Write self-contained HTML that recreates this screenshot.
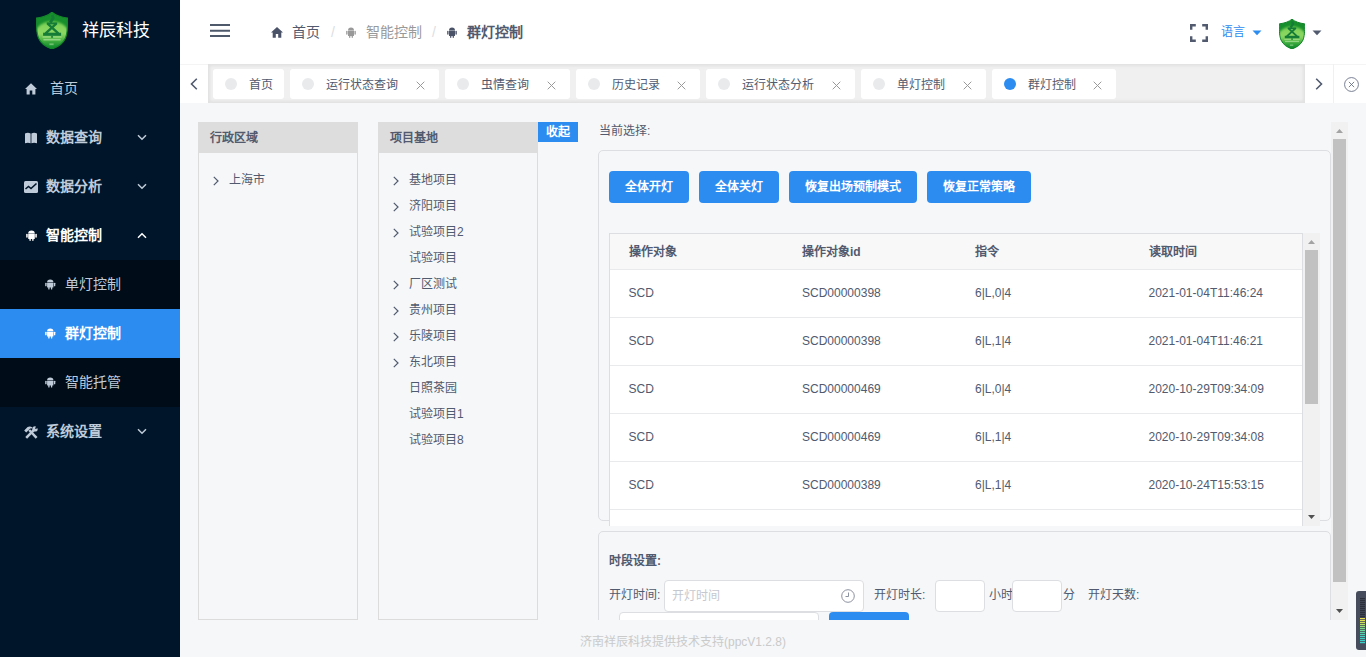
<!DOCTYPE html>
<html lang="zh-CN">
<head>
<meta charset="utf-8">
<title>群灯控制</title>
<style>
*{box-sizing:border-box;margin:0;padding:0}
html,body{width:1366px;height:657px;overflow:hidden}
body{font-family:"Liberation Sans",sans-serif;font-size:14px;color:#606266;background:#f5f7f9;position:relative}
svg{display:block}
.abs{position:absolute}

/* sidebar */
#side{position:absolute;left:0;top:0;width:180px;height:657px;background:#001529;overflow:hidden}
#logo{position:absolute;left:36px;top:12px;width:32px;height:37px}
#brand{position:absolute;left:82px;top:18px;font-size:17px;line-height:26px;color:#fff;white-space:nowrap}
.mi{position:absolute;left:0;width:180px;height:49px;color:#bfcbd9;font-size:14px;line-height:49px;white-space:nowrap}
.mi .ic{position:absolute;left:24px;top:18px;width:14px;height:14px}
.mi .tx{position:absolute;left:46px;top:0;font-weight:bold}
.mi .ar{position:absolute;left:137px;top:21px;width:10px;height:7px}
.mi.sub{background:#000c17}
.mi.sub .ic{left:43px}
.mi.sub .tx{left:65px;font-weight:normal}
.mi.act{background:#2d8cf0;color:#fff}

/* header */
#head{position:absolute;left:180px;top:0;width:1186px;height:64px;background:#fff}
.bc{position:absolute;top:22px;font-size:14px;line-height:20px;white-space:nowrap}

/* tabs */
#tabs{position:absolute;left:180px;top:64px;width:1186px;height:39px;background:#f0f0f0}
#tabs .bg{position:absolute;left:28px;top:0;width:1097px;height:39px;box-shadow:inset 0 0 3px 2px rgba(100,100,100,.1)}
.tb{position:absolute;top:5px;height:30px;background:#fff;border-radius:3px;font-size:12px;line-height:30px;color:#515a6e;white-space:nowrap}
.tb .dot{position:absolute;left:12px;top:9px;width:12px;height:12px;border-radius:50%;background:#e8eaec}
.tb .t{position:absolute;left:36px;top:1px}
.tb .x{position:absolute;right:14px;top:12px;width:9px;height:9px}
.nav{position:absolute;top:0;height:39px;background:#fff;border-top:1px solid #f4f4f4}

/* panels */
.pn{position:absolute;top:122px;width:160px;height:498px;border:1px solid #dcdcdc;background:#f5f7f9}
.pn .hd{position:absolute;left:-1px;top:-1px;width:160px;height:31px;background:#dddddd;font-weight:bold;font-size:12px;line-height:33px;padding-left:12px;color:#515a6e}
.tr{position:absolute;font-size:12px;line-height:26px;color:#515a6e;white-space:nowrap}
.chev{position:absolute;width:6px;height:10px}

.card{position:absolute;left:598px;width:733px;border:1px solid #dcdee2;border-radius:5px;background:#f5f7f9}
.btn{position:absolute;top:171px;height:32px;background:#2d8cf0;border-radius:4px;color:#fff;font-weight:bold;font-size:12px;line-height:32px;text-align:center;white-space:nowrap}

#tbl{position:absolute;left:609px;top:233px;width:694px;height:293px;background:#fff;border:1px solid #dcdee2;border-bottom:none;overflow:hidden}
.row{position:absolute;left:0;width:692px;height:48px;border-bottom:1px solid #e8eaec;font-size:12px;line-height:47px;color:#515a6e;white-space:nowrap}
.row span{position:absolute;top:0}
.row.h{height:36px;line-height:37px;background:#f8f8f9;font-weight:bold}
.c1{left:18.500px}.c2{left:192px}.c3{left:365px}.c4{left:538.500px}
.inp{position:absolute;background:#fff;border:1px solid #dcdee2;border-radius:4px}
.lb{position:absolute;font-size:12px;line-height:18px;color:#515a6e;white-space:nowrap}
</style>
</head>
<body>

<!-- SIDEBAR -->
<div id="side">
  <svg id="logo" viewBox="0 0 32 37"><use href="#shield"/></svg>
  <div id="brand">祥辰科技</div>

  <div class="mi" style="top:64px">
    <svg class="ic" style="left:25px;top:19px;width:12px;height:12px" viewBox="0 0 12 12"><path d="M6 0.200 L0 5.900 L1.600 5.900 L1.600 11.500 L4.700 11.500 L4.700 7.600 L7.300 7.600 L7.300 11.500 L10.400 11.500 L10.400 5.900 L12 5.900 Z" fill="#bfcbd9"/></svg>
    <span class="tx" style="left:50px;font-weight:normal">首页</span>
  </div>
  <div class="mi" style="top:113px">
    <svg class="ic" style="left:25px;top:19px;width:12px;height:12px" viewBox="0 0 12 12"><path d="M0 1.500 Q3 0 5.600 1.500 L5.600 11.300 Q3 10 0 11.300 Z M12 1.500 Q9 0 6.400 1.500 L6.400 11.300 Q9 10 12 11.300 Z" fill="#bfcbd9"/></svg>
    <span class="tx">数据查询</span>
    <svg class="ar" viewBox="0 0 10 7"><path d="M1 1.200 L5 5.200 L9 1.200" fill="none" stroke="#bfcbd9" stroke-width="1.500"/></svg>
  </div>
  <div class="mi" style="top:162px">
    <svg class="ic" style="left:24px;top:19px;width:14px;height:12px" viewBox="0 0 14 12"><rect x="0" y="0" width="14" height="12" rx="1.500" fill="#bfcbd9"/><path d="M1.500 8 L4.500 5.500 L7 7.500 L12.500 2.500" fill="none" stroke="#001529" stroke-width="1.600"/></svg>
    <span class="tx">数据分析</span>
    <svg class="ar" viewBox="0 0 10 7"><path d="M1 1.200 L5 5.200 L9 1.200" fill="none" stroke="#bfcbd9" stroke-width="1.500"/></svg>
  </div>
  <div class="mi" style="top:211px;color:#fff">
    <svg class="ic" style="left:26px;top:18.500px;width:11px;height:11px" viewBox="0 0 11 12" preserveAspectRatio="none"><use href="#andr" fill="#fff"/></svg>
    <span class="tx">智能控制</span>
    <svg class="ar" viewBox="0 0 10 7"><path d="M1 5.800 L5 1.800 L9 5.800" fill="none" stroke="#fff" stroke-width="1.500"/></svg>
  </div>
  <div class="mi sub" style="top:260px">
    <svg class="ic" style="left:45px;top:19px;width:10.500px;height:10.500px" viewBox="0 0 11 12" preserveAspectRatio="none"><use href="#andr" fill="#bfcbd9"/></svg>
    <span class="tx">单灯控制</span>
  </div>
  <div class="mi sub act" style="top:309px">
    <svg class="ic" style="left:45px;top:19px;width:10.500px;height:10.500px" viewBox="0 0 11 12" preserveAspectRatio="none"><use href="#andr" fill="#fff"/></svg>
    <span class="tx" style="font-weight:bold">群灯控制</span>
  </div>
  <div class="mi sub" style="top:358px">
    <svg class="ic" style="left:45px;top:19px;width:10.500px;height:10.500px" viewBox="0 0 11 12" preserveAspectRatio="none"><use href="#andr" fill="#bfcbd9"/></svg>
    <span class="tx">智能托管</span>
  </div>
  <div class="mi" style="top:407px">
    <svg class="ic" style="left:24px;top:19px;width:14px;height:13px" viewBox="0 0 14 13"><g stroke="#bfcbd9" stroke-width="2.500" fill="none"><path d="M5.200 4 L12.600 11.800"/><path d="M10 3.800 L2.200 11.800"/></g><path d="M0.200 4.400 L3.600 1 Q6 -0.200 8.400 1.400 L7.600 2.600 L6.200 2.400 L3 5.800 L2.200 6.400 Z" fill="#bfcbd9"/><circle cx="11" cy="2.900" r="2.700" fill="#bfcbd9"/><path d="M11 2.900 L12.100 -0.500 L15 2 Z" fill="#001529"/></svg>
    <span class="tx">系统设置</span>
    <svg class="ar" viewBox="0 0 10 7"><path d="M1 1.200 L5 5.200 L9 1.200" fill="none" stroke="#bfcbd9" stroke-width="1.500"/></svg>
  </div>
</div>

<svg width="0" height="0" style="position:absolute">
  <defs>
    <linearGradient id="lg1" x1="0" y1="0" x2="0" y2="1">
      <stop offset="0" stop-color="#17902c"/><stop offset="1" stop-color="#14882b"/>
    </linearGradient>
    <linearGradient id="lg2" gradientUnits="userSpaceOnUse" x1="0" y1="8" x2="0" y2="37">
      <stop offset="0" stop-color="#4fbd3a"/><stop offset="0.200" stop-color="#84d45c"/><stop offset="0.480" stop-color="#8dd863"/><stop offset="0.680" stop-color="#4db544"/><stop offset="0.880" stop-color="#1c9431"/><stop offset="1" stop-color="#14882b"/>
    </linearGradient>
    <filter id="bl" x="-20%" y="-20%" width="140%" height="140%"><feGaussianBlur stdDeviation="1.100"/></filter>
    <clipPath id="shc"><path d="M16 0.200 C12.500 3.200 6.500 5.300 0.400 6 C0.200 16 0.800 22 2.500 26 C5 31.500 10 35 16 36.900 C22 35 27 31.500 29.500 26 C31.200 22 31.800 16 31.600 6 C25.500 5.300 19.500 3.200 16 0.200Z"/></clipPath>
    <g id="shield">
      <path d="M16 0.200 C12.500 3.200 6.500 5.300 0.400 6 C0.200 16 0.800 22 2.500 26 C5 31.500 10 35 16 36.900 C22 35 27 31.500 29.500 26 C31.200 22 31.800 16 31.600 6 C25.500 5.300 19.500 3.200 16 0.200Z" fill="url(#lg1)"/>
      <g clip-path="url(#shc)"><ellipse cx="16" cy="30" rx="20" ry="21" fill="url(#lg2)" filter="url(#bl)"/></g>
      <path d="M16 0.200 C12.500 3.200 6.500 5.300 0.400 6 C0.200 16 0.800 22 2.500 26 C5 31.500 10 35 16 36.900 C22 35 27 31.500 29.500 26 C31.200 22 31.800 16 31.600 6 C25.500 5.300 19.500 3.200 16 0.200Z" fill="none" stroke="#13852a" stroke-width="1.200"/>
      <g fill="none" stroke="#157c38" stroke-linejoin="round"><path d="M16.300 3 L17.200 6.200 L14.200 10.600" stroke-width="2.800"/><path d="M10.700 11.400 H21.200" stroke-width="2"/><path d="M11.600 11.600 L22.300 21.400 M20.300 11.600 L9.600 21.400" stroke-width="2.400"/></g><rect x="7.100" y="20.700" width="18" height="3.100" fill="#157c38"/><rect x="15.300" y="23.800" width="1.500" height="2" fill="#157c38"/>
      <rect x="6.500" y="24.500" width="8.400" height="1" fill="#b9eaa0" opacity=".75"/>
      <rect x="17.200" y="24.500" width="8.400" height="1" fill="#b9eaa0" opacity=".75"/>
      <rect x="7.400" y="26.900" width="17.200" height="1.600" fill="#c9efbb" opacity=".55"/>
      <rect x="13.400" y="31.400" width="4.200" height="1.800" fill="#c9efbb" opacity=".45"/>
    </g>
    <g id="andr">
      <path d="M2.200 4.200 L8.800 4.200 L8.800 9.200 Q8.800 9.800 8.200 9.800 L7.600 9.800 L7.600 11.300 A0.700 0.700 0 0 1 6.200 11.300 L6.200 9.800 L4.800 9.800 L4.800 11.300 A0.700 0.700 0 0 1 3.400 11.300 L3.400 9.800 L2.800 9.800 Q2.200 9.800 2.200 9.200 Z"/>
      <path d="M2.200 3.700 A3.300 3.200 0 0 1 8.800 3.700 Z"/>
      <rect x="0.200" y="4.200" width="1.500" height="4.200" rx="0.750"/>
      <rect x="9.300" y="4.200" width="1.500" height="4.200" rx="0.750"/>
    </g>
  </defs>
</svg>

<!-- HEADER -->
<div id="head">
  <svg class="abs" style="left:30px;top:24px;width:20px;height:14px" viewBox="0 0 20 14"><path d="M0 1 H20 M0 6.800 H20 M0 12 H20" stroke="#4e5a6c" stroke-width="2" fill="none"/></svg>
  <svg class="abs" style="left:91px;top:27px;width:12px;height:11px" viewBox="0 0 12 11"><path d="M6 0 L0 5.600 L1.700 5.600 L1.700 10.800 L4.800 10.800 L4.800 7 L7.200 7 L7.200 10.800 L10.300 10.800 L10.300 5.600 L12 5.600 Z" fill="#4a5268"/></svg>
  <span class="bc" style="left:112px;color:#515a6e">首页</span>
  <span class="bc" style="left:151px;color:#dcdee2">/</span>
  <svg class="abs" style="left:166px;top:27px;width:10px;height:11px" viewBox="0 0 11 12"><use href="#andr" fill="#999"/></svg>
  <span class="bc" style="left:186px;color:#999">智能控制</span>
  <span class="bc" style="left:252px;color:#dcdee2">/</span>
  <svg class="abs" style="left:267px;top:27px;width:10px;height:11px" viewBox="0 0 11 12"><use href="#andr" fill="#4a5268"/></svg>
  <span class="bc" style="left:287px;color:#515a6e;font-weight:bold">群灯控制</span>

  <svg class="abs" style="left:1010px;top:24px;width:18px;height:18px" viewBox="0 0 18 18"><path d="M1.200 5.800 V1.200 H5.800 M12.200 1.200 H16.800 V5.800 M16.800 12.200 V16.800 H12.200 M5.800 16.800 H1.200 V12.200" fill="none" stroke="#515a6e" stroke-width="2.400"/></svg>
  <span class="abs" style="left:1041px;top:22px;font-size:12px;line-height:20px;color:#2d8cf0;white-space:nowrap">语言</span>
  <svg class="abs" style="left:1072px;top:30px;width:10px;height:6px" viewBox="0 0 10 6"><path d="M0.500 0.500 H9.500 L5 5.200 Z" fill="#2d8cf0"/></svg>
  <svg class="abs" style="left:1099px;top:19px;width:26px;height:30px" viewBox="0 0 32 37"><use href="#shield"/></svg>
  <svg class="abs" style="left:1132px;top:30px;width:10px;height:6px" viewBox="0 0 10 6"><path d="M0.500 0.500 H9.500 L5 5.200 Z" fill="#515a6e"/></svg>
</div>

<!-- TABS -->
<div id="tabs">
  <div class="bg"></div>
  <div class="nav" style="left:0;width:28px"><svg class="abs" style="left:10px;top:13px;width:8px;height:12px" viewBox="0 0 8 12"><path d="M6.800 0.800 L1.500 6 L6.800 11.200" fill="none" stroke="#515a6e" stroke-width="1.600"/></svg></div>
  <div class="tb" style="left:33px;width:71px"><i class="dot"></i><span class="t">首页</span></div>
  <div class="tb" style="left:110px;width:149px"><i class="dot"></i><span class="t">运行状态查询</span><svg class="x" viewBox="0 0 9 9"><path d="M0.700 0.700 L8.300 8.300 M8.300 0.700 L0.700 8.300" stroke="#999" stroke-width="1" fill="none"/></svg></div>
  <div class="tb" style="left:265px;width:125px"><i class="dot"></i><span class="t">虫情查询</span><svg class="x" viewBox="0 0 9 9"><path d="M0.700 0.700 L8.300 8.300 M8.300 0.700 L0.700 8.300" stroke="#999" stroke-width="1" fill="none"/></svg></div>
  <div class="tb" style="left:396px;width:124px"><i class="dot"></i><span class="t">历史记录</span><svg class="x" viewBox="0 0 9 9"><path d="M0.700 0.700 L8.300 8.300 M8.300 0.700 L0.700 8.300" stroke="#999" stroke-width="1" fill="none"/></svg></div>
  <div class="tb" style="left:526px;width:149px"><i class="dot"></i><span class="t">运行状态分析</span><svg class="x" viewBox="0 0 9 9"><path d="M0.700 0.700 L8.300 8.300 M8.300 0.700 L0.700 8.300" stroke="#999" stroke-width="1" fill="none"/></svg></div>
  <div class="tb" style="left:681px;width:125px"><i class="dot"></i><span class="t">单灯控制</span><svg class="x" viewBox="0 0 9 9"><path d="M0.700 0.700 L8.300 8.300 M8.300 0.700 L0.700 8.300" stroke="#999" stroke-width="1" fill="none"/></svg></div>
  <div class="tb" style="left:812px;width:124px"><i class="dot" style="background:#2d8cf0"></i><span class="t">群灯控制</span><svg class="x" viewBox="0 0 9 9"><path d="M0.700 0.700 L8.300 8.300 M8.300 0.700 L0.700 8.300" stroke="#999" stroke-width="1" fill="none"/></svg></div>
  <div class="nav" style="left:1125px;width:28px"><svg class="abs" style="left:10px;top:13px;width:8px;height:12px" viewBox="0 0 8 12"><path d="M1.200 0.800 L6.500 6 L1.200 11.200" fill="none" stroke="#515a6e" stroke-width="1.600"/></svg></div>
  <div class="nav" style="left:1154px;width:32px"><svg class="abs" style="left:9.500px;top:11.500px;width:15px;height:15px" viewBox="0 0 16 16"><circle cx="8" cy="8" r="7.400" fill="none" stroke="#626a80" stroke-width="0.900"/><path d="M5.200 5.200 L10.800 10.800 M10.800 5.200 L5.200 10.800" stroke="#626a80" stroke-width="0.900"/></svg></div>
</div>

<!-- CONTENT -->
<div class="pn" style="left:198px"><div class="hd">行政区域</div></div>
<svg class="chev" style="left:213px;top:176px" viewBox="0 0 6 10"><path d="M0.800 0.800 L5 5 L0.800 9.200" fill="none" stroke="#515a6e" stroke-width="1.200"/></svg>
<span class="tr" style="left:229px;top:167px">上海市</span>
<div class="pn" style="left:378px"><div class="hd">项目基地</div></div>
<svg class="chev" style="left:393px;top:176px" viewBox="0 0 6 10"><path d="M0.800 0.800 L5 5 L0.800 9.200" fill="none" stroke="#515a6e" stroke-width="1.200"/></svg>
<span class="tr" style="left:409px;top:167px">基地项目</span>
<svg class="chev" style="left:393px;top:202px" viewBox="0 0 6 10"><path d="M0.800 0.800 L5 5 L0.800 9.200" fill="none" stroke="#515a6e" stroke-width="1.200"/></svg>
<span class="tr" style="left:409px;top:193px">济阳项目</span>
<svg class="chev" style="left:393px;top:228px" viewBox="0 0 6 10"><path d="M0.800 0.800 L5 5 L0.800 9.200" fill="none" stroke="#515a6e" stroke-width="1.200"/></svg>
<span class="tr" style="left:409px;top:219px">试验项目2</span>
<span class="tr" style="left:409px;top:245px">试验项目</span>
<svg class="chev" style="left:393px;top:280px" viewBox="0 0 6 10"><path d="M0.800 0.800 L5 5 L0.800 9.200" fill="none" stroke="#515a6e" stroke-width="1.200"/></svg>
<span class="tr" style="left:409px;top:271px">厂区测试</span>
<svg class="chev" style="left:393px;top:306px" viewBox="0 0 6 10"><path d="M0.800 0.800 L5 5 L0.800 9.200" fill="none" stroke="#515a6e" stroke-width="1.200"/></svg>
<span class="tr" style="left:409px;top:297px">贵州项目</span>
<svg class="chev" style="left:393px;top:332px" viewBox="0 0 6 10"><path d="M0.800 0.800 L5 5 L0.800 9.200" fill="none" stroke="#515a6e" stroke-width="1.200"/></svg>
<span class="tr" style="left:409px;top:323px">乐陵项目</span>
<svg class="chev" style="left:393px;top:358px" viewBox="0 0 6 10"><path d="M0.800 0.800 L5 5 L0.800 9.200" fill="none" stroke="#515a6e" stroke-width="1.200"/></svg>
<span class="tr" style="left:409px;top:349px">东北项目</span>
<span class="tr" style="left:409px;top:375px">日照茶园</span>
<span class="tr" style="left:409px;top:401px">试验项目1</span>
<span class="tr" style="left:409px;top:427px">试验项目8</span>
<div class="abs" style="left:538px;top:122px;width:40px;height:20px;background:#2d8cf0;color:#fff;font-size:12px;font-weight:bold;line-height:20px;text-align:center">收起</div>
<span class="lb" style="left:599px;top:122px">当前选择:</span>
<div class="card" style="top:150px;height:371px"></div>
<div class="btn" style="left:609px;width:80px">全体开灯</div>
<div class="btn" style="left:699px;width:80px">全体关灯</div>
<div class="btn" style="left:789px;width:128px">恢复出场预制模式</div>
<div class="btn" style="left:927px;width:104px">恢复正常策略</div>
<div id="tbl">
  <div class="row h" style="top:0"><span class="c1">操作对象</span><span class="c2">操作对象id</span><span class="c3">指令</span><span class="c4">读取时间</span></div>
  <div class="row" style="top:36px"><span class="c1">SCD</span><span class="c2">SCD00000398</span><span class="c3">6|L,0|4</span><span class="c4">2021-01-04T11:46:24</span></div>
  <div class="row" style="top:84px"><span class="c1">SCD</span><span class="c2">SCD00000398</span><span class="c3">6|L,1|4</span><span class="c4">2021-01-04T11:46:21</span></div>
  <div class="row" style="top:132px"><span class="c1">SCD</span><span class="c2">SCD00000469</span><span class="c3">6|L,0|4</span><span class="c4">2020-10-29T09:34:09</span></div>
  <div class="row" style="top:180px"><span class="c1">SCD</span><span class="c2">SCD00000469</span><span class="c3">6|L,1|4</span><span class="c4">2020-10-29T09:34:08</span></div>
  <div class="row" style="top:228px"><span class="c1">SCD</span><span class="c2">SCD00000389</span><span class="c3">6|L,1|4</span><span class="c4">2020-10-24T15:53:15</span></div>
  <div class="row" style="top:276px"><span class="c1"></span><span class="c2"></span><span class="c3"></span><span class="c4"></span></div>
</div>
<div class="abs" style="left:1303px;top:233px;width:17px;height:293px;background:#f1f1f1"></div>
<div class="abs" style="left:1305px;top:250px;width:13px;height:154px;background:#c1c1c1"></div>
<svg class="abs" style="left:1308px;top:240px;width:7px;height:4px" viewBox="0 0 7 4"><path d="M0 4 L3.500 0 L7 4Z" fill="#a3a3a3"/></svg>
<svg class="abs" style="left:1308px;top:515px;width:7px;height:4px" viewBox="0 0 7 4"><path d="M0 0 L3.500 4 L7 0Z" fill="#505050"/></svg>
<div class="card" style="top:531px;height:120px"></div>
<span class="lb" style="left:609px;top:552px;font-weight:bold">时段设置:</span>
<span class="lb" style="left:609px;top:586px">开灯时间:</span>
<div class="inp" style="left:664px;top:580px;width:200px;height:32px"><span class="lb" style="left:7px;top:6px;color:#c5c8ce">开灯时间</span><svg class="abs" style="left:176px;top:8px;width:14px;height:14px" viewBox="0 0 14 14"><circle cx="7" cy="7" r="6.300" fill="none" stroke="#808695" stroke-width="0.900"/><path d="M7.500 3.500 V7.500 H4.500" fill="none" stroke="#808695" stroke-width="0.900"/></svg></div>
<span class="lb" style="left:874px;top:586px">开灯时长:</span>
<div class="inp" style="left:935px;top:580px;width:50px;height:32px"></div>
<span class="lb" style="left:989px;top:586px">小时</span>
<div class="inp" style="left:1012px;top:580px;width:50px;height:32px"></div>
<span class="lb" style="left:1062.500px;top:586px">分</span>
<span class="lb" style="left:1088px;top:586px">开灯天数:</span>
<div class="inp" style="left:619px;top:612px;width:200px;height:32px"></div>
<div class="abs" style="left:829px;top:612px;width:80px;height:32px;background:#2d8cf0;border-radius:4px"></div>
<div class="abs" style="left:1331px;top:122px;width:17px;height:498px;background:#f1f1f1"></div>
<div class="abs" style="left:1333px;top:139px;width:13px;height:443px;background:#c1c1c1"></div>
<svg class="abs" style="left:1336px;top:129px;width:7px;height:4px" viewBox="0 0 7 4"><path d="M0 4 L3.500 0 L7 4Z" fill="#a3a3a3"/></svg>
<svg class="abs" style="left:1336px;top:609px;width:7px;height:4px" viewBox="0 0 7 4"><path d="M0 0 L3.500 4 L7 0Z" fill="#505050"/></svg>
<div class="abs" style="left:180px;top:620px;width:1186px;height:37px;background:#f5f7f9"></div>
<div class="abs" style="left:180px;top:633px;width:1006px;text-align:center;font-size:12px;line-height:18px;color:#cacaca;white-space:nowrap">济南祥辰科技提供技术支持(ppcV1.2.8)</div>
<svg class="abs" style="left:1356px;top:591px;width:10px;height:59px" viewBox="0 0 10 59"><path d="M3 0 H10 V59 H3 Q0 59 0 56 V3 Q0 0 3 0Z" fill="#464c5b"/><rect x="4" y="7" width="5" height="1.200" fill="#2b303b"/><rect x="4" y="9" width="5" height="1.200" fill="#2b303b"/><rect x="4" y="11" width="5" height="1.200" fill="#2b303b"/><rect x="4" y="13" width="5" height="1.200" fill="#2b303b"/><rect x="4" y="15" width="5" height="1.200" fill="#2b303b"/><rect x="4" y="17" width="5" height="1.200" fill="#2b303b"/><rect x="4" y="19" width="5" height="1.200" fill="#2b303b"/><rect x="4" y="21" width="5" height="1.200" fill="#2b303b"/><rect x="4" y="23" width="5" height="1.200" fill="#2b303b"/><rect x="4" y="25" width="5" height="1.200" fill="#2b303b"/><rect x="4" y="27" width="5" height="1.200" fill="#e9e04b"/><rect x="4" y="29" width="5" height="1.200" fill="#e0e050"/><rect x="4" y="31" width="5" height="1.200" fill="#cfe25a"/><rect x="4" y="33" width="5" height="1.200" fill="#b5e268"/><rect x="4" y="35" width="5" height="1.200" fill="#96e07a"/><rect x="4" y="37" width="5" height="1.200" fill="#7fdc8c"/><rect x="4" y="39" width="5" height="1.200" fill="#6bd99c"/><rect x="4" y="41" width="5" height="1.200" fill="#5cd6aa"/><rect x="4" y="43" width="5" height="1.200" fill="#4fd4b6"/><rect x="4" y="45" width="5" height="1.200" fill="#45d2bf"/><rect x="4" y="47" width="5" height="1.200" fill="#40d1c4"/><rect x="4" y="49" width="5" height="1.200" fill="#3dd0c8"/><rect x="4" y="51" width="5" height="1.200" fill="#3bcfca"/></svg>

</body>
</html>
